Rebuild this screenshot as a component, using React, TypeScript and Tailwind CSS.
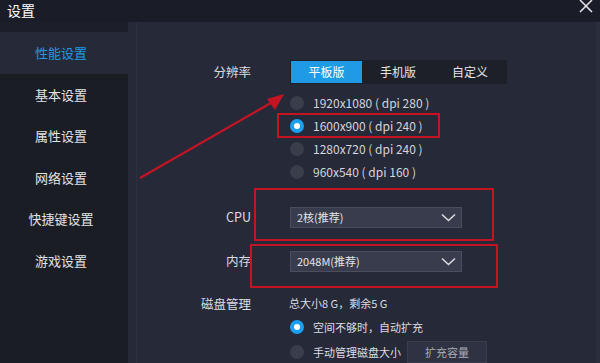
import React from "react";

const font = { fontFamily: '"Noto Sans CJK SC", "Noto Sans", sans-serif' };

const navItems = ["性能设置", "基本设置", "属性设置", "网络设置", "快捷键设置", "游戏设置"];
const resolutions = [
  "1920x1080 ( dpi 280 )",
  "1600x900 ( dpi 240 )",
  "1280x720 ( dpi 240 )",
  "960x540 ( dpi 160 )",
];

const Radio: React.FC<{ checked?: boolean }> = ({ checked }) =>
  checked ? (
    <span className="w-[14px] h-[14px] rounded-full bg-[#1d9fef] flex items-center justify-center shrink-0">
      <span className="w-[6px] h-[6px] rounded-full bg-white" />
    </span>
  ) : (
    <span className="w-[14px] h-[14px] rounded-full bg-[#3a3d4a] shrink-0" />
  );

const Chevron = () => (
  <svg width="15" height="9" viewBox="0 0 15 9" fill="none">
    <path d="M1 1.5 L7.5 7.5 L14 1.5" stroke="#d8dae0" strokeWidth="1.6" />
  </svg>
);

const Select: React.FC<{ value: string }> = ({ value }) => (
  <div className="w-[172px] h-[21px] bg-[#393c4d] border border-[#4a4d5e] flex items-center justify-between pl-[6px] pr-[5px]">
    <span className="text-[11px] text-[#e4e5ea] leading-none">{value}</span>
    <Chevron />
  </div>
);

const Label: React.FC<{ children: React.ReactNode }> = ({ children }) => (
  <div className="w-[123px] text-right text-[12.5px] text-[#dcdde2] leading-none shrink-0">
    {children}
  </div>
);

export default function App() {
  return (
    <div className="w-[600px] h-[363px] bg-[#262938] flex flex-col overflow-hidden select-none" style={font}>
      {/* title bar */}
      <div className="h-[22px] bg-[#1a1d27] flex items-start justify-between shrink-0">
        <span className="text-[14px] leading-[22px] text-white ml-[7px] -mt-[1px]">设置</span>
        <svg className="mr-[7px]" width="14" height="13" viewBox="0 0 14 13">
          <path d="M1 0 L13 12 M13 0 L1 12" stroke="#e8e8ec" strokeWidth="1.5" />
        </svg>
      </div>

      <div className="flex flex-1 min-h-0">
        {/* sidebar */}
        <div className="w-[128px] bg-[#1b1d24] flex flex-col shrink-0">
          <div className="h-[10px] bg-[#1c1f2a]" />
          {navItems.map((item, i) => (
            <div
              key={item}
              className={`h-[41.6px] flex items-center justify-center pr-[6px] text-[13px] ${
                i === 0 ? "bg-[#262938] text-[#1e9be4]" : "text-[#e2e3e7]"
              }`}
            >
              {item}
            </div>
          ))}
        </div>

        {/* main */}
        <div className="relative flex-1 flex flex-col border-r-[4px] border-[#2b2e3d]">
          <div className="absolute left-[8px] top-0 bottom-0 w-px bg-[#2d3041]" />

          {/* resolution tabs */}
          <div className="flex items-center mt-[38px]">
            <Label>分辨率</Label>
            <div className="ml-[39px] flex bg-[#1d2029] p-px w-[217px] h-[24px]">
              <div className="w-[71px] bg-[#1e9be4] text-white text-[12px] flex items-center justify-center">平板版</div>
              <div className="flex-1 text-[#e4e5ea] text-[12px] flex items-center justify-center">手机版</div>
              <div className="flex-1 text-[#e4e5ea] text-[12px] flex items-center justify-center">自定义</div>
            </div>
          </div>

          <div className="flex flex-col mt-[7px] pl-[162px]">
            {resolutions.map((r, i) => (
              <div key={r} className="h-[23px] flex items-center gap-[9px]">
                <Radio checked={i === 1} />
                <span className="text-[12px] text-[#d4d5da] leading-none">{r}</span>
              </div>
            ))}
          </div>

          <div className="flex items-center mt-[24px]">
            <Label>CPU</Label>
            <div className="ml-[39px]">
              <Select value="2核(推荐)" />
            </div>
          </div>

          <div className="flex items-center mt-[23px]">
            <Label>内存</Label>
            <div className="ml-[39px]">
              <Select value="2048M(推荐)" />
            </div>
          </div>

          <div className="flex items-center h-[20px] mt-[23px]">
            <Label>磁盘管理</Label>
            <span className="ml-[38px] text-[11px] text-[#dcdde2] leading-none">总大小8 G，剩余5 G</span>
          </div>

          <div className="flex items-center gap-[9px] h-[22px] mt-[5px] pl-[162px]">
            <Radio checked />
            <span className="text-[11px] text-[#dcdde2] leading-none">空间不够时，自动扩充</span>
          </div>

          <div className="flex items-center gap-[9px] h-[22px] mt-[4px] pl-[162px]">
            <Radio />
            <span className="text-[11px] text-[#dcdde2] leading-none">手动管理磁盘大小</span>
            <span className="-ml-[3px] w-[80px] h-[22px] bg-[#2f3243] border border-[#3a3d4e] text-[11px] text-[#a9abb5] flex items-center justify-center">
              扩充容量
            </span>
          </div>

          {/* red annotations */}
          <div className="absolute left-[149px] top-[91px] w-[163px] h-[25px] border-2 border-[#c41424]" />
          <div className="absolute left-[126px] top-[166px] w-[240px] h-[53px] border-2 border-[#c41424]" />
          <div className="absolute left-[122px] top-[222px] w-[248px] h-[44px] border-2 border-[#c41424]" />
          <svg className="absolute left-[8px] top-[68px]" width="160" height="95" viewBox="0 0 160 95">
            <path d="M4 88 L140 10" stroke="#c41424" strokeWidth="2.2" />
            <path d="M148 4 L131 9 L139 20 Z" fill="#c41424" />
          </svg>
        </div>
      </div>
    </div>
  );
}
